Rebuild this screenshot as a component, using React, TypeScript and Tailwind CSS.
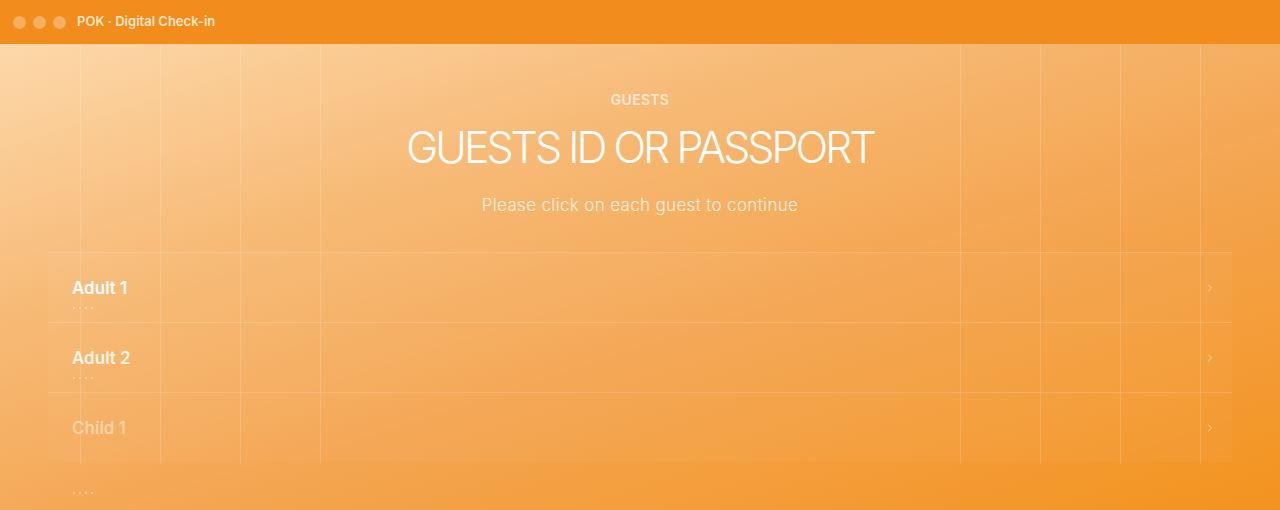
import { ChevronRight } from 'lucide-react';

type Guest = {
  id: string;
  label: string;
  tone: string;
  dots: boolean;
};

const guests: Guest[] = [
  { id: 'adult-1', label: 'Adult 1', tone: 'text-white', dots: true },
  { id: 'adult-2', label: 'Adult 2', tone: 'text-white/85', dots: true },
  { id: 'child-1', label: 'Child 1', tone: 'text-white/45', dots: false },
];

const WindowBar = () => (
  <div className="h-[44px] bg-[#f28c1c] flex items-center px-[13px] gap-[7px] shrink-0">
    <span className="w-[13px] h-[13px] rounded-full bg-white/30" />
    <span className="w-[13px] h-[13px] rounded-full bg-white/30" />
    <span className="w-[13px] h-[13px] rounded-full bg-white/30" />
    <span className="ml-[4px] text-[13px] font-semibold text-[#fde6c8]">POK · Digital Check-in</span>
  </div>
);

const Dots = ({ show = true }: { show?: boolean }) => (
  <div className={`flex gap-[4px] pl-[1px] ${show ? '' : 'invisible'}`}>
    <span className="w-[2px] h-[2px] rounded-full bg-white/45" />
    <span className="w-[2px] h-[2px] rounded-full bg-white/45" />
    <span className="w-[2px] h-[2px] rounded-full bg-white/45" />
    <span className="w-[2px] h-[2px] rounded-full bg-white/45" />
  </div>
);

const GuestRow = ({ guest }: { guest: Guest }) => (
  <button className="w-full h-[70px] border-t border-white/15 bg-white/[0.03] flex items-start justify-between pl-[24px] pr-[16px] pt-[23px] text-left">
    <div className="flex flex-col gap-[7px]">
      <span className={`text-[17px] leading-[24px] font-semibold ${guest.tone}`}>{guest.label}</span>
      <Dots show={guest.dots} />
    </div>
    <ChevronRight className="w-[12px] h-[12px] mt-[6px] text-white/60" strokeWidth={2} />
  </button>
);

export default function App() {
  return (
    <div className="w-[1280px] h-[510px] overflow-hidden flex flex-col font-['Inter','Noto_Sans',sans-serif]">
      <WindowBar />
      <main className="relative flex-1 bg-[linear-gradient(162deg,#fdd8aa_0%,#f7bb78_30%,#f4a550_60%,#f3931f_100%)]">
        {/* decorative column grid, one hairline every 80px */}
        <div className="pointer-events-none absolute left-0 right-0 top-0 h-[420px] bg-[linear-gradient(to_right,rgba(255,255,255,0.16)_1px,transparent_1px)] bg-[length:80px_100%] [mask-image:linear-gradient(to_right,transparent_3%,black_5%,black_26%,transparent_29%,transparent_72%,black_74%,black_100%)]" />

        <div className="relative flex flex-col items-center pt-[46px]">
          <p className="text-[14px] leading-[20px] font-semibold text-white/70 tracking-[0.02em]">GUESTS</p>
          <h1 className="mt-[12px] text-[43px] leading-[50px] font-light text-white tracking-[-0.07em]">
            GUESTS ID OR PASSPORT
          </h1>
          <p className="mt-[20px] text-[17px] leading-[26px] font-light text-white/80 tracking-[0.02em]">
            Please click on each guest to continue
          </p>
        </div>

        <div className="relative mx-[48px] mt-[34px] flex flex-col">
          {guests.map((g) => (
            <GuestRow key={g.id} guest={g} />
          ))}
          <div className="pl-[24px] pt-[30px]">
            <Dots />
          </div>
        </div>
      </main>
    </div>
  );
}
